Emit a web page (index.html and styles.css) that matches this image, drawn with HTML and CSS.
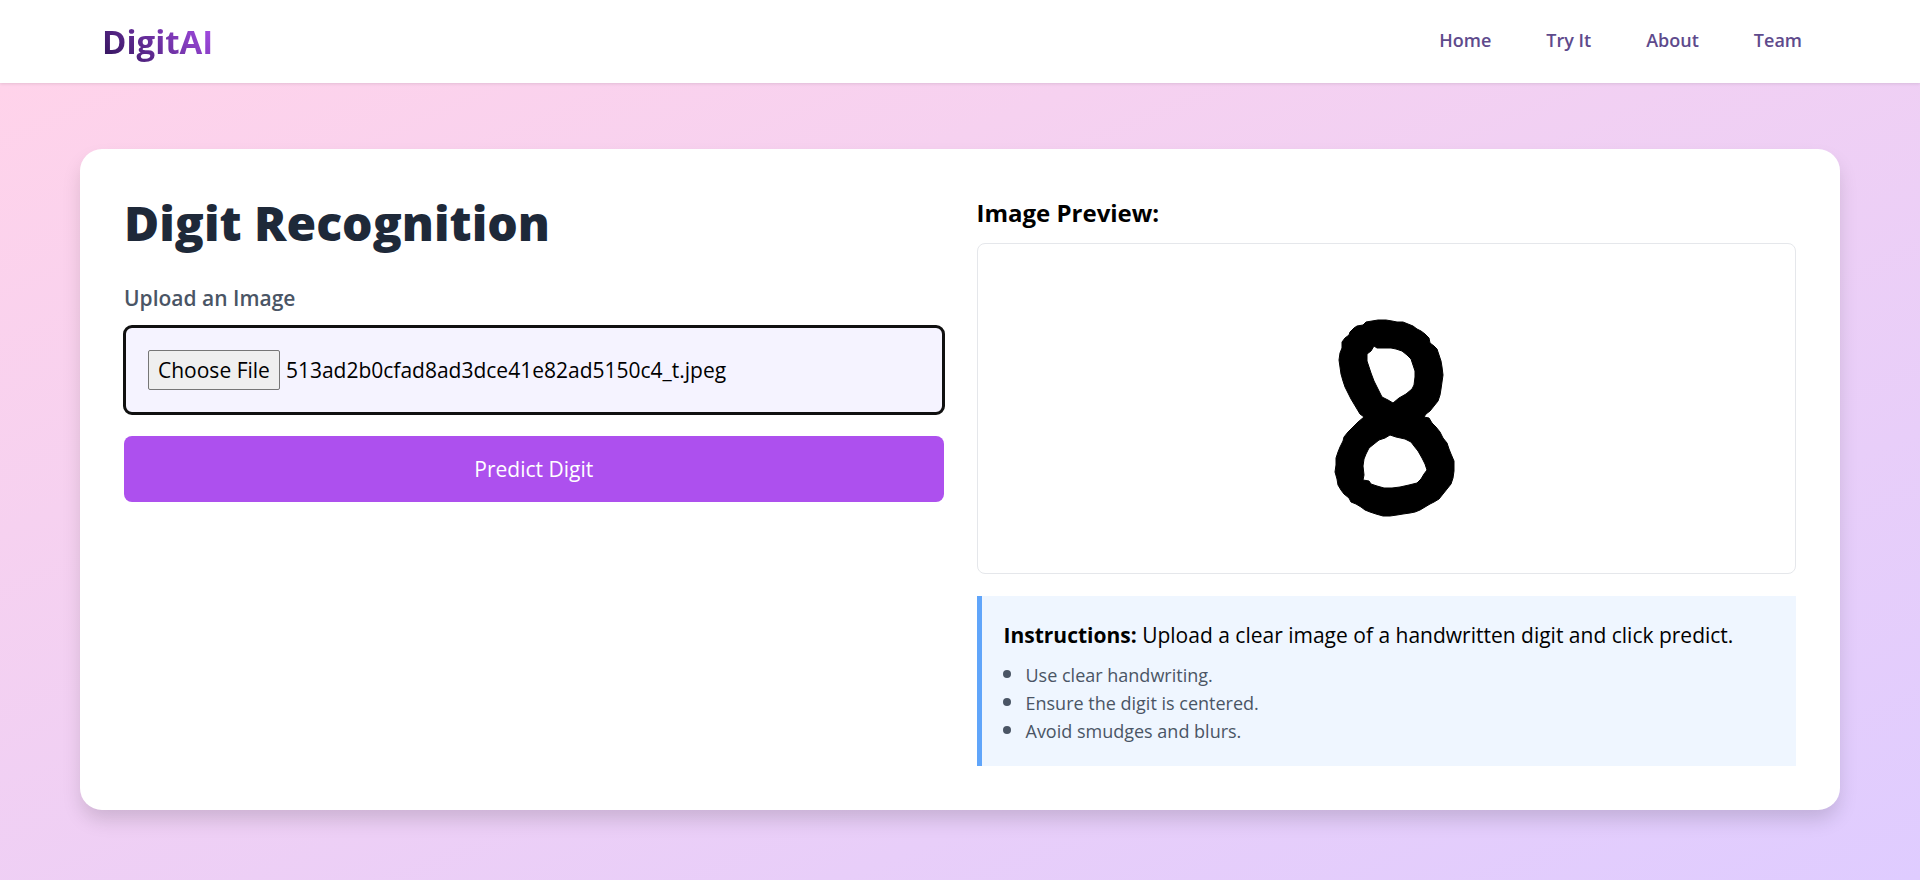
FILE: index.html
```html
<!DOCTYPE html>
<html lang="en">
<head>
<meta charset="utf-8">
<meta name="viewport" content="width=device-width, initial-scale=1">
<title>DigitAI</title>
<link rel="stylesheet" href="styles.css">
</head>
<body>
<header class="navbar">
  <div class="navbar-inner">
    <a class="logo" href="#">DigitAI</a>
    <nav class="nav-links">
      <a href="#home">Home</a>
      <a href="#try">Try It</a>
      <a href="#about">About</a>
      <a href="#team">Team</a>
    </nav>
  </div>
</header>
<main class="page">
  <div class="card">
    <form class="upload">
      <h1 class="title">Digit Recognition</h1>
      <label class="upload-label" for="image">Upload an Image</label>
      <input class="upload-input" id="image" type="file" accept="image/*">
      <button class="predict" type="button">Predict Digit</button>
    </form>
    <section class="result">
      <h2 class="preview-title">Image Preview:</h2>
      <div class="preview">
        <svg class="digit" viewBox="0 0 200 250" role="img" aria-label="Handwritten digit 8">
          <path fill-rule="evenodd" stroke="#000" stroke-width="1" stroke-linejoin="round" d="M57 35L63 34L66 31L72 30L78 29L86 29L92 30L97 31L103 31L108 33L113 35L117 38L121 40L125 43L129 47L130 52L134 55L137 58L139 64L141 70L142 76L143 84L142 91L141 98L140 104L138 110L134 115L130 120L126 123L124 126L129 127L132 132L136 136L140 141L143 147L147 152L149 158L151 163L154 170L154 180L153 187L151 193L147 198L143 203L139 208L134 211L130 213L125 216L120 219L115 221L110 222L103 223L97 224L90 225L83 225L76 223L70 221L65 219L61 216L56 213L51 211L49 207L44 203L41 199L38 194L37 188L35 181L36 174L36 167L38 161L40 156L43 150L44 146L48 141L53 136L58 131L64 126L60 123L57 118L54 113L51 108L48 102L45 96L43 90L41 83L40 76L39 69L40 62L42 57L42 51L45 47L49 44L50 41L54 37ZM74 55L71 60L67 63L67 70L69 76L71 82L74 90L78 98L82 106L88 109L93 112L99 107L106 103L112 98L114 94L115 86L115 80L113 74L111 68L107 64L102 60L96 58L91 57L84 57L77 57ZM90 144L85 147L79 149L74 153L69 157L66 163L64 168L63 175L64 184L63 189L69 190L71 193L77 195L84 197L92 197L100 196L109 194L117 192L121 188L124 183L127 179L125 173L122 167L118 160L114 155L111 151L105 148L96 146Z"/>
        </svg>
      </div>
      <div class="instructions">
        <p class="instructions-text"><strong>Instructions:</strong> Upload a clear image of a handwritten digit and click predict.</p>
        <ul class="tips">
          <li>Use clear handwriting.</li>
          <li>Ensure the digit is centered.</li>
          <li>Avoid smudges and blurs.</li>
        </ul>
      </div>
    </section>
  </div>
</main>
<script src="app.js"></script>
</body>
</html>
```
FILE: styles.css
```css
* {
  box-sizing: border-box;
  margin: 0;
  padding: 0;
}

body {
  min-height: 100vh;
  display: flex;
  flex-direction: column;
  font-family: "Open Sans", "Noto Sans", sans-serif;
  color: #000;
}

.navbar {
  position: relative;
  background: #fff;
  box-shadow: 0 1px 3px rgba(0, 0, 0, 0.1);
}

.navbar-inner {
  display: flex;
  align-items: center;
  justify-content: space-between;
  max-width: 1760px;
  height: 83px;
  margin: 0 auto;
  padding: 0 38px 0 22px;
}

.logo {
  font-size: 33px;
  font-weight: 700;
  line-height: 44px;
  text-decoration: none;
  color: transparent;
  background: linear-gradient(45deg, #2d1155, #ac50ee);
  -webkit-background-clip: text;
  background-clip: text;
}

.nav-links {
  display: flex;
  gap: 55px;
  padding-bottom: 4px;
}

.nav-links a {
  font-size: 18px;
  font-weight: 600;
  line-height: 28px;
  color: #5e4a8c;
  text-decoration: none;
}

.page {
  flex: 1;
  padding: 66px 80px 70px;
  background: linear-gradient(to bottom right, #ffd3ea, #dfccff);
}

.card {
  display: grid;
  grid-template-columns: 1fr 1fr;
  gap: 33px;
  max-width: 1760px;
  margin: 0 auto;
  padding: 44px;
  background: #fff;
  border-radius: 22px;
  box-shadow: 0 11px 20px -2px rgba(0, 0, 0, 0.15);
}

.upload {
  display: flex;
  flex-direction: column;
  align-items: stretch;
}

.title {
  margin-bottom: 29px;
  font-size: 48px;
  font-weight: 800;
  line-height: 60px;
  color: #1e2939;
}

.upload-label {
  margin-bottom: 11px;
  font-size: 21px;
  font-weight: 600;
  line-height: 33px;
  color: #4a5565;
}

.upload-input {
  width: 100%;
  padding: 24px;
  margin-bottom: 22px;
  font: inherit;
  font-size: 21px;
  line-height: 32px;
  color: #000;
  background: #f5f3ff;
  border-radius: 8px;
  outline: 3px solid #101010;
  outline-offset: -2px;
}

.upload-input::file-selector-button {
  height: 40px;
  padding: 0 9px;
  margin-right: 6px;
  font: inherit;
  color: #000;
  background: #efefef;
  border: 1px solid #767676;
  border-radius: 2px;
}

.predict {
  padding: 16px;
  font: inherit;
  font-size: 21px;
  line-height: 34px;
  color: #fff;
  background: #ad50ee;
  border: 0;
  border-radius: 8px;
}

.preview-title {
  margin-bottom: 11px;
  font-size: 24px;
  font-weight: 700;
  line-height: 39px;
}

.preview {
  display: flex;
  justify-content: center;
  height: 331px;
  padding: 47px 0 0 28px;
  border: 1px solid #e5e7eb;
  border-radius: 8px;
}

.digit {
  width: 200px;
  height: 250px;
}

.instructions {
  margin-top: 22px;
  padding: 22px;
  background: #eff6ff;
  border-left: 5px solid #60a5fa;
}

.instructions-text {
  margin-bottom: 8px;
  font-size: 21px;
  line-height: 34px;
}

.tips {
  padding-left: 22px;
  font-size: 18px;
  line-height: 26px;
  color: #4a5565;
}

.tips li::marker {
  font-size: 22px;
}
```
FILE: app.js
```js
const input = document.getElementById("image");
const transfer = new DataTransfer();
transfer.items.add(new File([""], "513ad2b0cfad8ad3dce41e82ad5150c4_t.jpeg", { type: "image/jpeg" }));
input.files = transfer.files;
```
